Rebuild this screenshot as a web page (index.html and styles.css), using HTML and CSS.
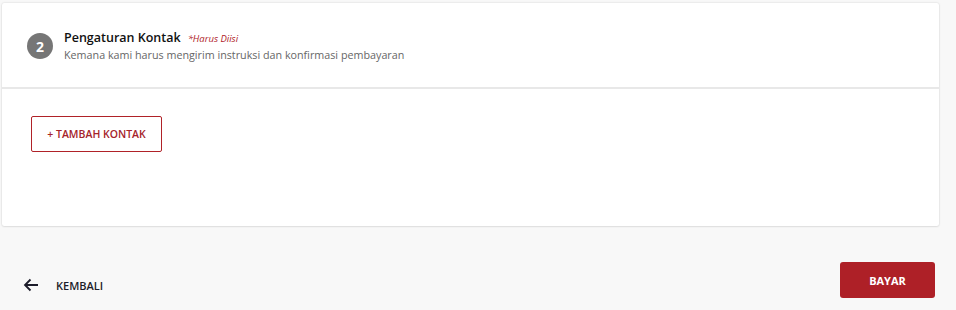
FILE: index.html
```html
<!DOCTYPE html>
<html lang="id">
<head>
<meta charset="utf-8">
<link rel="stylesheet" href="styles.css">
</head>
<body>
<div class="page">
  <section class="card">
    <header class="card-head">
      <span class="step">2</span>
      <div class="head-text">
        <div class="title-row"><h2 class="title">Pengaturan Kontak</h2><span class="req">*Harus Diisi</span></div>
        <p class="subtitle">Kemana kami harus mengirim instruksi dan konfirmasi pembayaran</p>
      </div>
    </header>
    <div class="card-body">
      <button class="btn-outline">+ TAMBAH KONTAK</button>
    </div>
  </section>
  <footer class="actions">
    <a class="back">
      <svg width="16" height="14" viewBox="0 0 16 14" aria-hidden="true"><path d="M15 7H2M7.5 1.5L2 7l5.5 5.5" fill="none" stroke="#1c1c2a" stroke-width="1.8"/></svg>
      <span>KEMBALI</span>
    </a>
    <button class="btn-primary">BAYAR</button>
  </footer>
</div>
</body>
</html>
```

FILE: styles.css
```css
* { box-sizing: border-box; }
html, body { margin: 0; padding: 0; }
body {
  background: #f8f8f8;
  font-family: "Open Sans", "Noto Sans", sans-serif;
  width: 956px;
  height: 310px;
  overflow: hidden;
}
.page { padding: 3px 17px 0 2px; }
.card {
  background: #fff;
  border-radius: 2px;
  box-shadow: 0 0 2px rgba(0,0,0,0.18), 0 1px 2px rgba(0,0,0,0.06);
}
.card-head {
  display: flex;
  align-items: center;
  height: 86px;
  padding: 2px 0 0 25px;
  border-bottom: 2px solid #e8e8e8;
}
.step {
  width: 26px; height: 26px;
  border-radius: 50%;
  background: #767676;
  color: #fff;
  font-weight: 700;
  font-size: 14px;
  display: flex; align-items: center; justify-content: center;
  margin-right: 11px;
}
.head-text { display: flex; flex-direction: column; }
.title-row { display: flex; align-items: baseline; gap: 7px; }
.title {
  margin: 0;
  font-size: 12.5px;
  font-weight: 600;
  color: #111;
  line-height: 18px;
}
.req { font-size: 9.5px; font-style: italic; font-weight: 400; color: #b02228; }
.subtitle {
  margin: 0;
  font-size: 10.75px;
  color: #666;
  line-height: 17px;
}
.card-body {
  height: 137px;
  padding: 27px 0 0 29px;
}
.btn-outline {
  height: 36px;
  width: 131px;
  border: 1px solid #b02228;
  border-radius: 2px;
  background: #fff;
  color: #a5232a;
  font-family: inherit;
  font-size: 10.5px;
  font-weight: 600;
  padding: 0;
}
.actions {
  display: flex;
  justify-content: space-between;
  align-items: center;
  padding: 36px 4px 0 21px;
}
.back {
  display: flex; align-items: center;
  gap: 17px;
  font-size: 11px;
  font-weight: 600;
  color: #1c1c2a;
  margin-top: 10px;
}
.btn-primary {
  width: 95px; height: 36px;
  background: #ae2027;
  color: #fff;
  border: none;
  border-radius: 3px;
  font-family: inherit;
  font-size: 11px;
  font-weight: 700;
}
```
